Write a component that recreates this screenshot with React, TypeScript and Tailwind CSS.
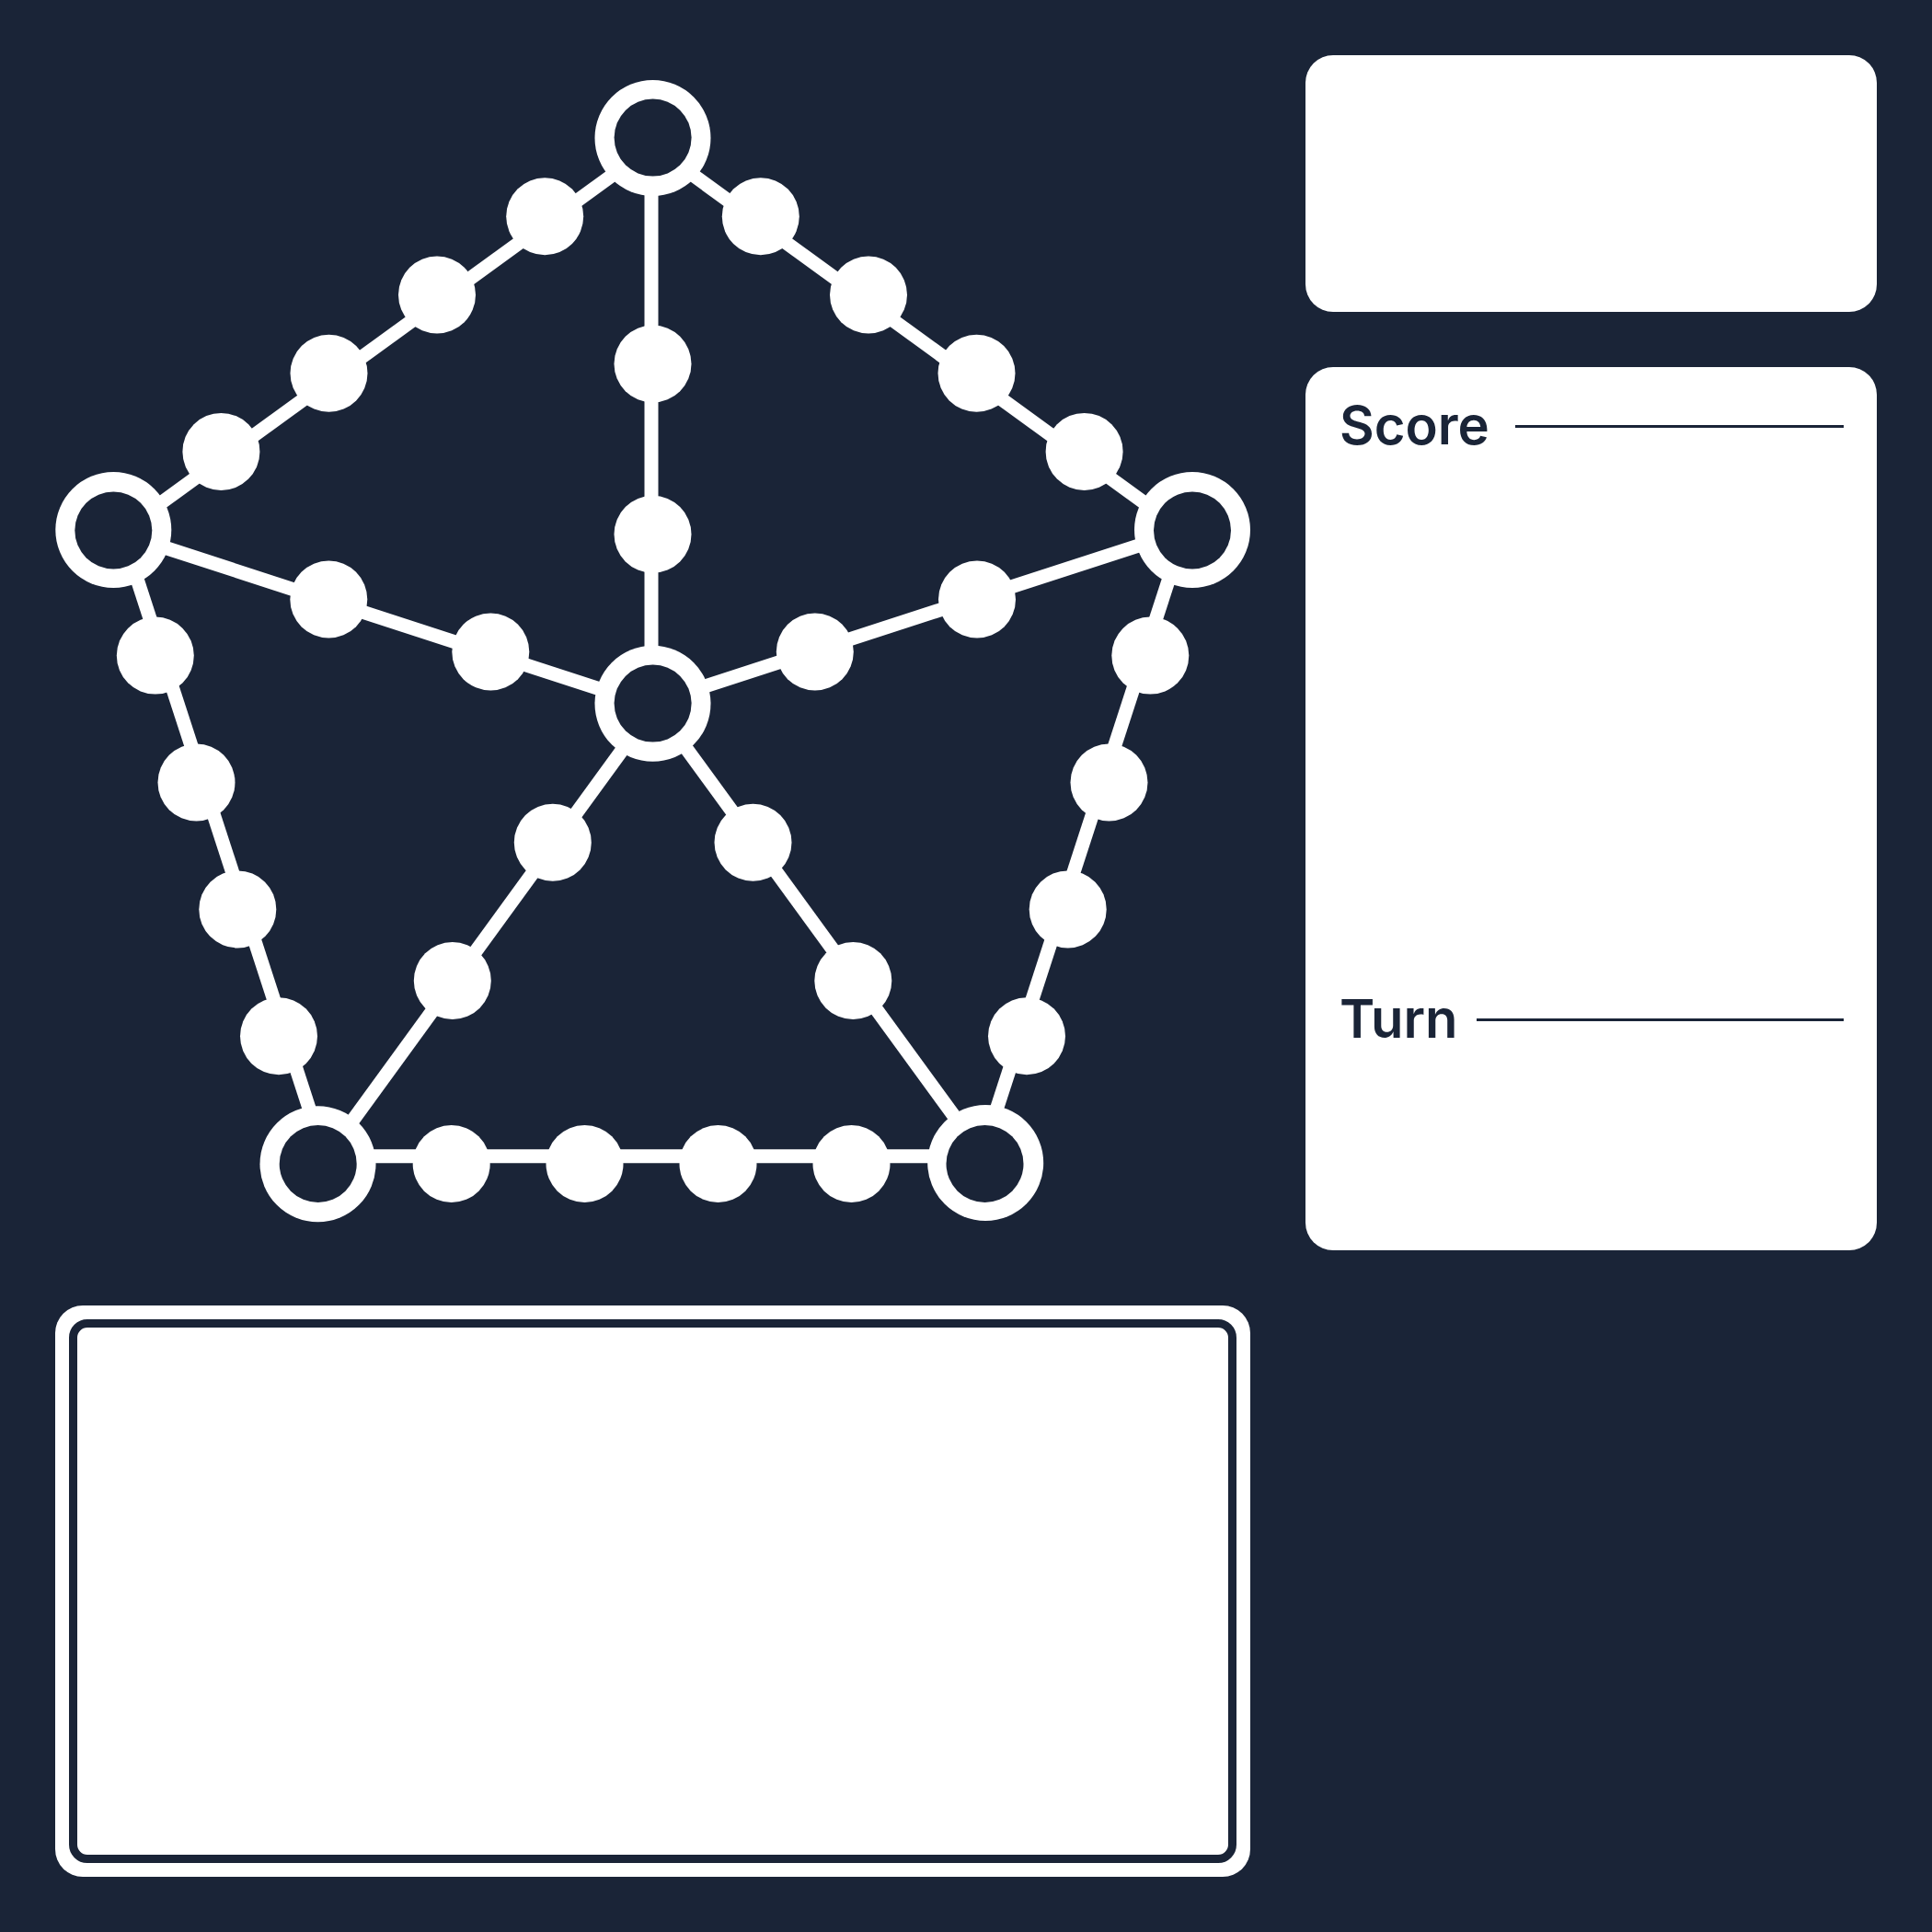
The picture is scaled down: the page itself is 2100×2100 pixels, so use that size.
const NAVY = "#1a2437";

const links = [
  [709.5, 158.5, 1296, 584.5],
  [709.5, 158.5, 123, 584.5],
  [131.7, 576, 355.6, 1265],
  [1287.9, 576, 1064, 1265],
  [345.5, 1256.8, 1071, 1256.8],
  [708, 150, 708, 765],
  [123, 577, 709.5, 767.6],
  [709.5, 764.3, 1296, 574],
  [712.8, 765, 349.1, 1265],
  [710.6, 765, 1074.9, 1265],
];

const stops = [
  [592.2, 235.3], [475, 320.5], [357.5, 405.7], [240.4, 490.9],
  [826.8, 235.3], [944, 320.5], [1061.5, 405.7], [1178.6, 490.9],
  [168.8, 712.6], [213.5, 850.5], [258.3, 988.4], [303, 1126.3],
  [1250.3, 712.6], [1205.5, 850.5], [1160.7, 988.4], [1116, 1126.3],
  [490.7, 1265], [635.5, 1265], [780.5, 1265], [925.5, 1265],
  [709.5, 395.5], [709.5, 580.8],
  [357.3, 651.5], [533.3, 708.5],
  [1062, 651.5], [885.8, 708.5],
  [600.8, 915.8], [491.8, 1066],
  [818.5, 915.8], [927.3, 1066],
];

// Outer ring centre, then the centre of the hole inside it.
const hubs = [
  [709.5, 150, 709.6, 149.6],
  [123.3, 576, 123.3, 576.5],
  [1296, 576, 1296, 576.5],
  [709.5, 764.8, 709.6, 764.6],
  [345.5, 1265.3, 345.7, 1265],
  [1071.2, 1264, 1070.5, 1265],
];

function Board() {
  return (
    <svg viewBox="60 60 1299 1299" className="block w-full" role="img" aria-label="Game board">
      <g stroke="white" strokeWidth="15">
        {links.map(([x1, y1, x2, y2], i) => (
          <line key={i} x1={x1} y1={y1} x2={x2} y2={y2} />
        ))}
      </g>
      {stops.map(([cx, cy], i) => (
        <circle key={i} cx={cx} cy={cy} r="42" fill="white" />
      ))}
      {hubs.map(([cx, cy, hx, hy], i) => (
        <g key={i}>
          <circle cx={cx} cy={cy} r="63" fill="white" />
          <circle cx={hx} cy={hy} r="42" fill={NAVY} />
        </g>
      ))}
    </svg>
  );
}

function Heading({ label, gap }: { label: string; gap: string }) {
  return (
    <div className={`flex items-center ${gap}`}>
      <h2 className="pb-0.5 text-[58px] leading-[59px] font-semibold">{label}</h2>
      <div className="h-[3px] flex-1 bg-[#1a2437]" />
    </div>
  );
}

export default function App() {
  return (
    <main className="grid min-h-screen grid-cols-[1299fr_621fr] content-start gap-[60px] bg-[#1a2437] p-[60px] font-['Inter',sans-serif] text-[#1a2437]">
      <Board />
      <aside className="flex flex-col gap-[60px]">
        <section className="aspect-[621/279] rounded-[30px] bg-white" />
        <section className="grid flex-1 grid-rows-[645fr_245fr] rounded-[30px] bg-white pt-[34px] pr-9 pb-9 pl-[37px]">
          <div>
            <Heading label="Score" gap="gap-7" />
          </div>
          <div>
            <Heading label="Turn" gap="gap-5" />
          </div>
        </section>
      </aside>
      <section className="flex aspect-[1299/621] rounded-[30px] bg-white p-[15px]">
        <div className="flex-1 rounded-[20px] border-[9px] border-[#1a2437]" />
      </section>
    </main>
  );
}
